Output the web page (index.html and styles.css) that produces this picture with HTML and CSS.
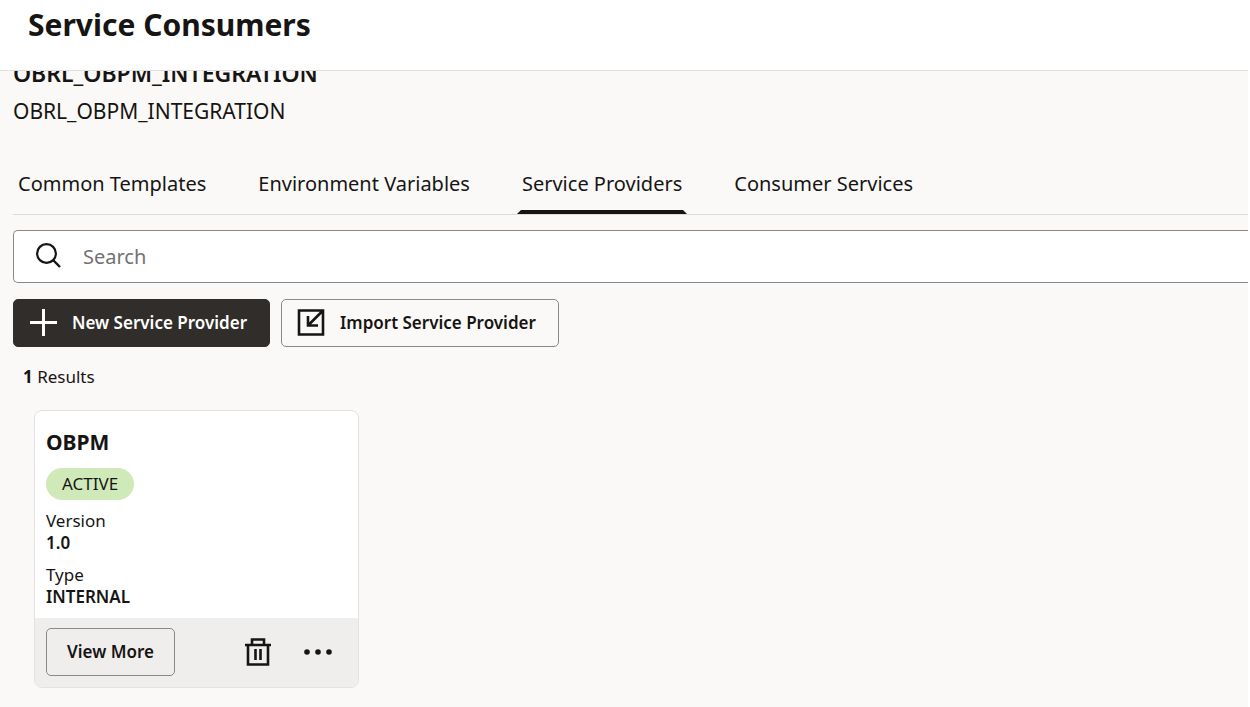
FILE: index.html
```html
<!DOCTYPE html>
<html lang="en">
<head>
<meta charset="utf-8">
<meta name="viewport" content="width=device-width, initial-scale=1">
<title>Service Consumers</title>
<link rel="stylesheet" href="styles.css">
</head>
<body>

<header class="header">
  <h1>Service Consumers</h1>
</header>

<main class="content">
  <h2 class="consumer-name">OBRL_OBPM_INTEGRATION</h2>
  <p class="consumer-desc">OBRL_OBPM_INTEGRATION</p>

  <div class="tabs" role="tablist">
    <button class="tab" role="tab">Common Templates</button>
    <button class="tab" role="tab">Environment Variables</button>
    <button class="tab active" role="tab" aria-selected="true">Service Providers</button>
    <button class="tab" role="tab">Consumer Services</button>
  </div>

  <div class="search">
    <svg class="icon" viewBox="0 0 28 28" aria-hidden="true">
      <circle cx="11.5" cy="10.5" r="9.4" fill="none" stroke="currentColor" stroke-width="2.2"/>
      <path d="M18 17L25 24" fill="none" stroke="currentColor" stroke-width="2.4"/>
    </svg>
    <input type="text" placeholder="Search" aria-label="Search">
  </div>

  <div class="actions">
    <button class="btn primary">
      <svg class="icon" viewBox="0 0 28 28" aria-hidden="true">
        <path d="M14.5 0V27M1 13.5H28" fill="none" stroke="currentColor" stroke-width="3"/>
      </svg>
      New Service Provider
    </button>
    <button class="btn">
      <svg class="icon" viewBox="0 0 28 28" aria-hidden="true">
        <path d="M2 1.5H26V25.5H2ZM26 1.5L11 16.5M11 7V16.5H21" fill="none" stroke="currentColor" stroke-width="2.6"/>
      </svg>
      Import Service Provider
    </button>
  </div>

  <p class="results"><b>1</b> Results</p>

  <div class="cards">
    <article class="card">
      <div class="card-body">
        <h3>OBPM</h3>
        <span class="badge">ACTIVE</span>
        <dl>
          <dt>Version</dt>
          <dd>1.0</dd>
          <dt>Type</dt>
          <dd>INTERNAL</dd>
        </dl>
      </div>
      <div class="card-footer">
        <button class="btn view">View More</button>
        <button class="icon-btn" aria-label="Delete">
          <svg class="icon" viewBox="0 0 28 28" aria-hidden="true">
            <path d="M1 7H27M8 7V1.5H20V7M4 7V26.5H24V7M11.5 11V22M16.5 11V22" fill="none" stroke="currentColor" stroke-width="2.6"/>
          </svg>
        </button>
        <button class="icon-btn" aria-label="More actions">
          <svg class="icon" viewBox="0 0 28 28" aria-hidden="true">
            <g fill="currentColor">
              <circle cx="3" cy="14" r="2.8"/>
              <circle cx="14" cy="14" r="2.8"/>
              <circle cx="25" cy="14" r="2.8"/>
            </g>
          </svg>
        </button>
      </div>
    </article>
  </div>
</main>

</body>
</html>
```

FILE: styles.css
```css
* {
  box-sizing: border-box;
}

body {
  margin: 0;
  min-height: 100vh;
  border-right: 2px solid #ffffff;
  background-color: #faf9f7;
  color: #161513;
  font-family: "Noto Sans", "Open Sans", sans-serif;
  font-size: 17px;
  line-height: 22px;
}

h1, h2, h3, p, dl, dd {
  margin: 0;
}

button, input {
  font: inherit;
  color: inherit;
}

button {
  cursor: pointer;
}

.icon {
  display: block;
  flex: none;
  width: 28px;
  height: 28px;
}

/* Header stays above the scrolled content */
.header {
  position: sticky;
  top: 0;
  z-index: 1;
  height: 71px;
  padding: 4px 28px;
  background-color: #ffffff;
  border-bottom: 1px solid #e1e0df;
}

.header h1 {
  font-size: 30px;
  line-height: 42px;
}

.content {
  margin-top: -13px;
  padding-left: 13px;
}

.consumer-name {
  font-size: 23px;
  font-weight: 600;
  line-height: 30px;
}

.consumer-desc {
  margin-top: 8px;
  font-size: 21px;
  line-height: 30px;
}

/* Tabs */
.tabs {
  display: flex;
  gap: 42px;
  margin-top: 43px;
  border-bottom: 1px solid #dddcda;
}

.tab {
  padding: 0 1px 11px;
  border: 4px solid transparent;
  border-top: none;
  background: none;
  font-size: 20px;
  line-height: 30px;
}

.tab.active {
  border-bottom-color: #161513;
}

/* Search */
.search {
  display: flex;
  align-items: center;
  gap: 20px;
  height: 53px;
  margin-top: 15px;
  padding-left: 21px;
  background-color: #ffffff;
  border: 1px solid #8b8988;
  border-right: none;
  border-radius: 5px 0 0 5px;
}

.search input {
  flex: 1;
  padding: 0;
  border: none;
  outline: none;
  background: none;
  font-size: 20px;
}

.search input::placeholder {
  color: #73716f;
}

/* Buttons */
.actions {
  display: flex;
  gap: 11px;
  margin-top: 16px;
}

.btn {
  display: flex;
  align-items: center;
  gap: 15px;
  height: 48px;
  padding: 0 22px 0 15px;
  border: 1px solid #8b8988;
  border-radius: 5px;
  background: none;
  font-weight: 600;
}

.btn.primary {
  background-color: #312d2a;
  border-color: #312d2a;
  color: #ffffff;
}

.results {
  margin: 19px 10px 0;
}

/* Cards */
.cards {
  display: flex;
  flex-wrap: wrap;
  padding: 22px 21px;
}

.card {
  width: 325px;
  overflow: hidden;
  background-color: #ffffff;
  border: 1px solid #e4e2e0;
  border-radius: 8px;
}

.card-body {
  padding: 16px 11px 10px;
}

.card h3 {
  font-size: 21px;
  line-height: 30px;
}

.badge {
  display: inline-block;
  margin-top: 11px;
  padding: 0 16px;
  border-radius: 16px;
  background-color: #d0e9b9;
  line-height: 32px;
}

.card dt {
  margin-top: 10px;
}

.card dd {
  font-weight: 600;
}

.card-footer {
  display: flex;
  align-items: center;
  gap: 32px;
  padding: 10px 26px 11px 11px;
  background-color: #f0eeec;
}

.btn.view {
  margin-right: auto;
  padding: 0 20px;
}

.icon-btn {
  padding: 0;
  border: none;
  background: none;
}
```
